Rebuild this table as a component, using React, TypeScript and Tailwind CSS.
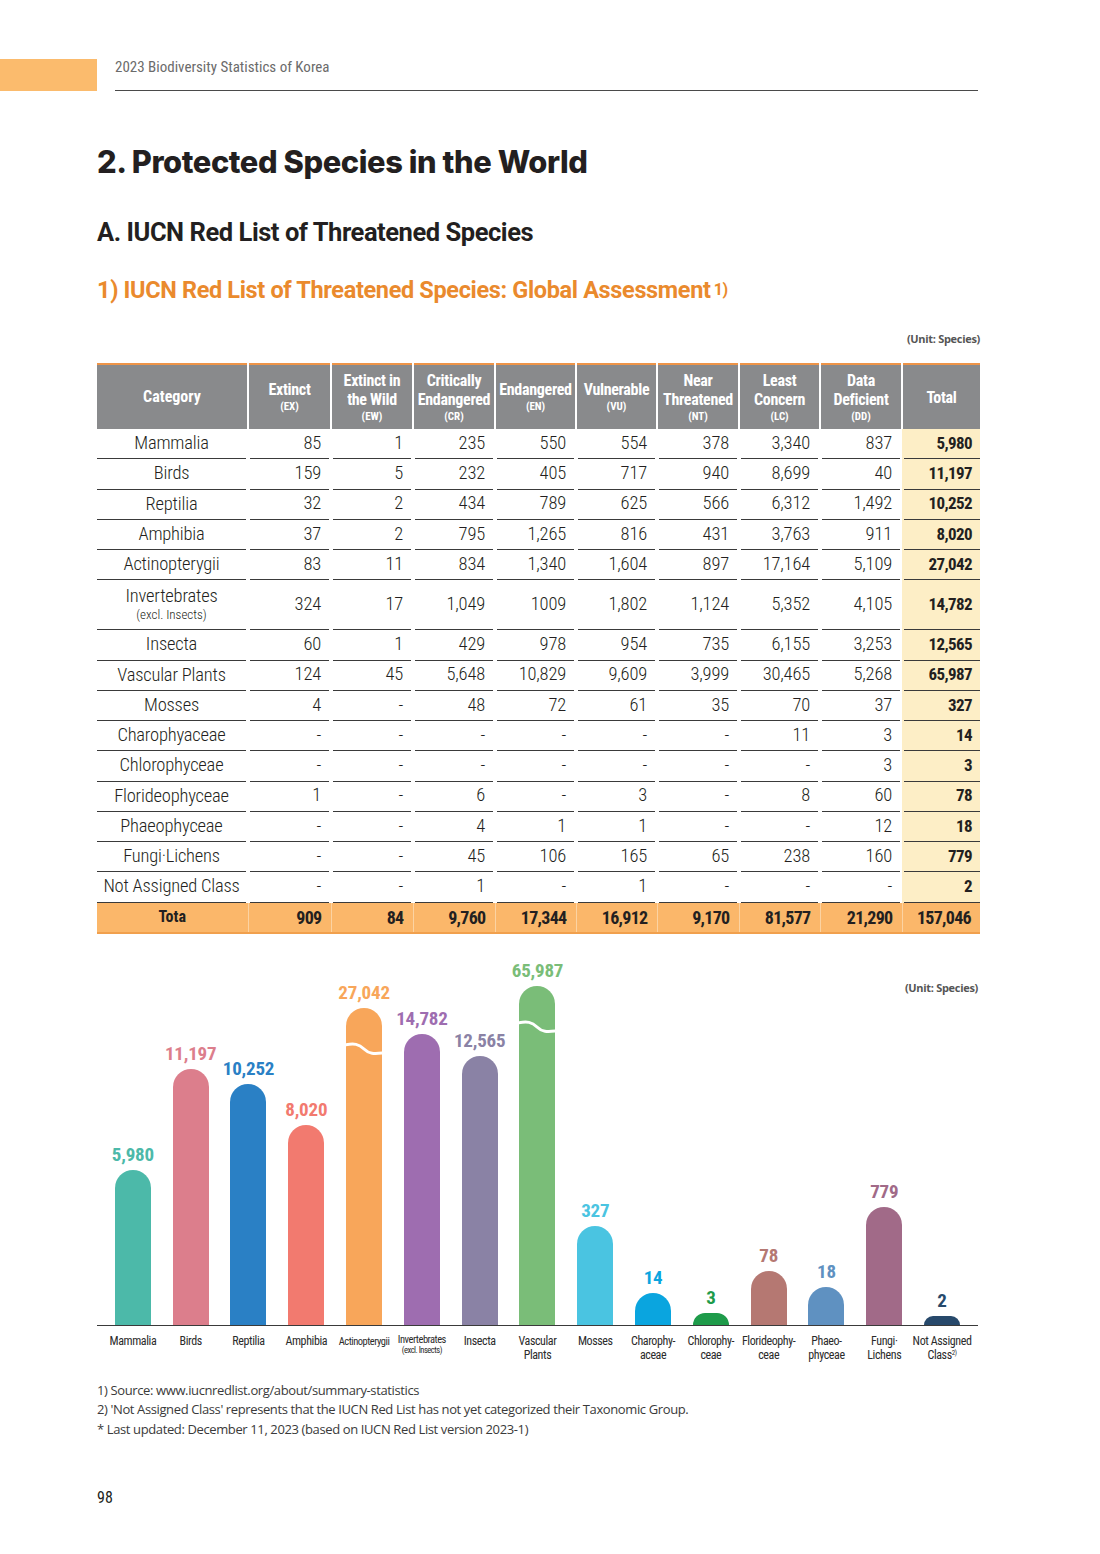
import React from 'react';

const narrow = "[font-family:'Liberation_Sans_Narrow','Roboto_Condensed','DejaVu_Sans_Condensed',sans-serif]";
const myriad = "[font-family:'Open_Sans','Noto_Sans',sans-serif]";

type Row = { name: string; sub?: string; cells: string[] };

const rows: Row[] = [
  { name: 'Mammalia', cells: ['85', '1', '235', '550', '554', '378', '3,340', '837', '5,980'] },
  { name: 'Birds', cells: ['159', '5', '232', '405', '717', '940', '8,699', '40', '11,197'] },
  { name: 'Reptilia', cells: ['32', '2', '434', '789', '625', '566', '6,312', '1,492', '10,252'] },
  { name: 'Amphibia', cells: ['37', '2', '795', '1,265', '816', '431', '3,763', '911', '8,020'] },
  { name: 'Actinopterygii', cells: ['83', '11', '834', '1,340', '1,604', '897', '17,164', '5,109', '27,042'] },
  { name: 'Invertebrates', sub: '(excl. Insects)', cells: ['324', '17', '1,049', '1009', '1,802', '1,124', '5,352', '4,105', '14,782'] },
  { name: 'Insecta', cells: ['60', '1', '429', '978', '954', '735', '6,155', '3,253', '12,565'] },
  { name: 'Vascular Plants', cells: ['124', '45', '5,648', '10,829', '9,609', '3,999', '30,465', '5,268', '65,987'] },
  { name: 'Mosses', cells: ['4', '-', '48', '72', '61', '35', '70', '37', '327'] },
  { name: 'Charophyaceae', cells: ['-', '-', '-', '-', '-', '-', '11', '3', '14'] },
  { name: 'Chlorophyceae', cells: ['-', '-', '-', '-', '-', '-', '-', '3', '3'] },
  { name: 'Florideophyceae', cells: ['1', '-', '6', '-', '3', '-', '8', '60', '78'] },
  { name: 'Phaeophyceae', cells: ['-', '-', '4', '1', '1', '-', '-', '12', '18'] },
  { name: 'Fungi·Lichens', cells: ['-', '-', '45', '106', '165', '65', '238', '160', '779'] },
  { name: 'Not Assigned Class', cells: ['-', '-', '1', '-', '1', '-', '-', '-', '2'] },
];

const totals = ['909', '84', '9,760', '17,344', '16,912', '9,170', '81,577', '21,290', '157,046'];

const headers: { lines: string[]; abbr?: string; w: string }[] = [
  { lines: ['Extinct'], abbr: '(EX)', w: 'w-[83px]' },
  { lines: ['Extinct in', 'the Wild'], abbr: '(EW)', w: 'w-[82px]' },
  { lines: ['Critically', 'Endangered'], abbr: '(CR)', w: 'w-[82px]' },
  { lines: ['Endangered'], abbr: '(EN)', w: 'w-[81px]' },
  { lines: ['Vulnerable'], abbr: '(VU)', w: 'w-[81px]' },
  { lines: ['Near', 'Threatened'], abbr: '(NT)', w: 'w-[82px]' },
  { lines: ['Least', 'Concern'], abbr: '(LC)', w: 'w-[81px]' },
  { lines: ['Data', 'Deficient'], abbr: '(DD)', w: 'w-[82px]' },
  { lines: ['Total'], w: 'w-[78px]' },
];

type Bar = { label: React.ReactNode; value: string; h: number; bg: string; fg: string; wave?: number };

const bars: Bar[] = [
  { label: 'Mammalia', value: '5,980', h: 155, bg: 'bg-[#4cb9a9]', fg: 'text-[#4cb9a9]' },
  { label: 'Birds', value: '11,197', h: 256, bg: 'bg-[#dc7e8c]', fg: 'text-[#dc7e8c]' },
  { label: 'Reptilia', value: '10,252', h: 241, bg: 'bg-[#2a80c5]', fg: 'text-[#2a80c5]' },
  { label: 'Amphibia', value: '8,020', h: 200, bg: 'bg-[#f27a6f]', fg: 'text-[#f27a6f]' },
  { label: <span className="text-[10.5px] tracking-[-0.5px]">Actinopterygii</span>, value: '27,042', h: 317, bg: 'bg-[#f8a65a]', fg: 'text-[#f8a65a]', wave: 33 },
  {
    label: (
      <span className="flex flex-col items-center leading-[11px] tracking-[-0.5px]">
        <span className="text-[10.5px]">Invertebrates</span>
        <span className="text-[8.5px]">(excl. Insects)</span>
      </span>
    ),
    value: '14,782', h: 291, bg: 'bg-[#9e6db0]', fg: 'text-[#9e6db0]',
  },
  { label: 'Insecta', value: '12,565', h: 269, bg: 'bg-[#8a82a5]', fg: 'text-[#8a82a5]' },
  { label: <>Vascular<br />Plants</>, value: '65,987', h: 339, bg: 'bg-[#7abd78]', fg: 'text-[#7abd78]', wave: 33 },
  { label: 'Mosses', value: '327', h: 99, bg: 'bg-[#4ac4e1]', fg: 'text-[#4ac4e1]' },
  { label: <>Charophy-<br />aceae</>, value: '14', h: 32, bg: 'bg-[#0aa5df]', fg: 'text-[#0aa5df]' },
  { label: <>Chlorophy-<br />ceae</>, value: '3', h: 12, bg: 'bg-[#1e9b4a]', fg: 'text-[#1e9b4a]' },
  { label: <>Florideophy-<br />ceae</>, value: '78', h: 54, bg: 'bg-[#b57872]', fg: 'text-[#b57872]' },
  { label: <>Phaeo-<br />phyceae</>, value: '18', h: 38, bg: 'bg-[#5f91c1]', fg: 'text-[#5f91c1]' },
  { label: <>Fungi·<br />Lichens</>, value: '779', h: 118, bg: 'bg-[#a16a88]', fg: 'text-[#a16a88]' },
  { label: <>Not Assigned<br />Class<sup className="text-[7px]">2)</sup></>, value: '2', h: 9, bg: 'bg-[#27496b]', fg: 'text-[#27496b]' },
];

function Wave({ top }: { top: number }) {
  return (
    <svg className="absolute left-0 w-[36px] h-[16px]" style={{ top }} viewBox="0 0 36 16">
      <path d="M-1 4 C 8 2, 13 3, 18 8 S 28 13, 37 12" fill="none" stroke="#fff" strokeWidth="3" />
    </svg>
  );
}

export default function App() {
  return (
    <div className="w-[1100px] h-[1554px] bg-white text-[#231f20] relative">
      {/* Running header */}
      <div className="flex pt-[59px]">
        <div className="w-[97px] h-[32px] bg-[#fbbb6d]" />
        <div className={`ml-[18px] mr-[122px] flex-1 h-[32px] border-b-[1.5px] border-[#4a4a4a] text-[15px] leading-[16px] text-[#6b6b6b] ${narrow}`}>
          2023 Biodiversity Statistics of Korea
        </div>
      </div>

      <div className="pl-[97px] pr-[120px]">
        <h1 className="mt-[53px] text-[30.8px] leading-[36px] font-extrabold tracking-[-0.4px] [font-family:'Inter',sans-serif]">
          2. Protected Species in the World
        </h1>
        <h2 className="mt-[37px] text-[25.5px] leading-[30px] font-bold tracking-[-0.45px] [font-family:'Roboto',sans-serif]">
          A. IUCN Red List of Threatened Species
        </h2>
        <h3 className="mt-[28px] text-[23.5px] leading-[30px] font-bold tracking-[-0.35px] text-[#ea8a2d] [font-family:'Roboto',sans-serif]">
          1) IUCN Red List of Threatened Species: Global Assessment<sup className="text-[16px] ml-[3px] relative -top-[3px]">1)</sup>
        </h3>
        <div className={`mt-[27px] text-right text-[11px] leading-[14px] font-bold text-[#555] tracking-[-0.3px] ${myriad}`}>(Unit: Species)</div>

        {/* Table */}
        <table className={`mt-[17px] w-[883px] table-fixed border-collapse border-t-2 border-[#ee9448] ${narrow}`}>
          <thead>
            <tr className="h-[65px] bg-[#898a8c] text-white">
              <th className="w-[151px] text-[16px] font-bold">Category</th>
              {headers.map((h, i) => (
                <th key={i} className={`${h.w} border-l-2 border-white font-bold align-middle`}>
                  <div className="flex flex-col items-center">
                    {h.lines.map(l => (
                      <span key={l} className="text-[16px] leading-[19px] tracking-[-0.3px]">{l}</span>
                    ))}
                    {h.abbr && <span className="text-[11px] leading-[14px] mt-[1px]">{h.abbr}</span>}
                  </div>
                </th>
              ))}
            </tr>
          </thead>
          <tbody>
            {rows.map(r => (
              <tr key={r.name}>
                <td className="p-0">
                  <div className={`mr-[2px] border-b border-[#3a3a3a] flex flex-col items-center justify-center font-light ${r.sub ? 'h-[50px]' : 'h-[30.25px]'}`}>
                    <span className="text-[18.5px] leading-[21px] tracking-[-0.2px]">{r.name}</span>
                    {r.sub && <span className="text-[13px] leading-[16px]">{r.sub}</span>}
                  </div>
                </td>
                {r.cells.map((c, i) => {
                  const last = i === r.cells.length - 1;
                  return (
                    <td key={i} className={`p-0 ${last ? 'bg-[#fdeec6]' : ''}`}>
                      <div
                        className={`mx-[2px] border-b border-[#3a3a3a] flex items-center justify-end pr-[8px] ${r.sub ? 'h-[50px]' : 'h-[30.25px]'} ${last ? 'font-bold text-[17px] tracking-[-0.6px] mr-0' : 'font-light text-[18.5px] tracking-[-0.2px]'}`}
                      >
                        {c}
                      </div>
                    </td>
                  );
                })}
              </tr>
            ))}
            <tr className="h-[30px] bg-[#fbb76a] font-bold border-b-2 border-[#f1a04d]">
              <td className="text-center text-[16px]">Tota</td>
              {totals.map((t, i) => (
                <td key={i} className="border-l border-[#fcd3a2] text-right pr-[9px] text-[18px] tracking-[-0.7px]">{t}</td>
              ))}
            </tr>
          </tbody>
        </table>

        {/* Chart */}
        <div className="relative mt-[18px] w-[881px]">
          <div className={`absolute right-0 top-[29px] text-[11px] leading-[14px] font-bold text-[#555] tracking-[-0.3px] ${myriad}`}>(Unit: Species)</div>
          <div className="h-[374px] flex items-end pl-[7px] border-b-[1.5px] border-[#3a3a3a]">
            {bars.map((b, i) => (
              <div key={i} className="w-[57.8px] flex flex-col items-center justify-end">
                <span className={`${b.fg} ${narrow} font-bold text-[19px] leading-[20px] tracking-[-0.2px] mb-[5px]`}>{b.value}</span>
                <div className={`relative w-[36px] rounded-t-[18px] ${b.bg}`} style={{ height: b.h }}>
                  {b.wave !== undefined && <Wave top={b.wave} />}
                </div>
              </div>
            ))}
          </div>
          <div className={`flex pl-[7px] pt-[8px] ${narrow}`}>
            {bars.map((b, i) => (
              <div key={i} className="w-[57.8px] text-center text-[12px] leading-[14px] tracking-[-0.4px] text-[#2b2b2b] whitespace-nowrap flex justify-center">
                <span>{b.label}</span>
              </div>
            ))}
          </div>
        </div>

        {/* Footnotes */}
        <div className={`mt-[19px] text-[13px] leading-[19.5px] text-[#3a3a3a] tracking-[-0.38px] ${myriad}`}>
          <p>1) Source: www.iucnredlist.org/about/summary-statistics</p>
          <p>2) 'Not Assigned Class' represents that the IUCN Red List has not yet categorized their Taxonomic Group.</p>
          <p>* Last updated: December 11, 2023 (based on IUCN Red List version 2023-1)</p>
        </div>

        <div className={`mt-[49px] text-[16px] leading-[20px] ${narrow}`}>98</div>
      </div>
    </div>
  );
}
